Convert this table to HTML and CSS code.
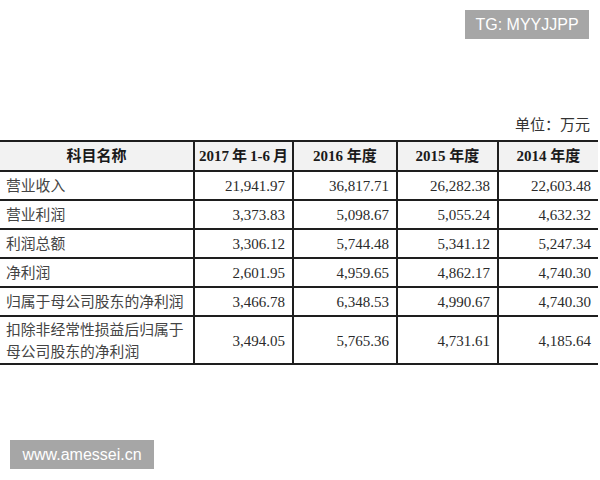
FILE: index.html
```html
<!DOCTYPE html>
<html lang="zh">
<head>
<meta charset="utf-8">
<link rel="stylesheet" href="styles.css">
</head>
<body>
<div class="page">
  <div class="unit">单位：万元</div>
  <table class="fin">
    <colgroup>
      <col class="c1"><col class="c2"><col class="c3"><col class="c4"><col class="c5">
    </colgroup>
    <thead>
      <tr><th>科目名称</th><th class="narrow">2017&#8201;年&#8201;1-6&#8201;月</th><th>2016 年度</th><th>2015 年度</th><th>2014 年度</th></tr>
    </thead>
    <tbody>
      <tr><td class="lbl">营业收入</td><td>21,941.97</td><td>36,817.71</td><td>26,282.38</td><td>22,603.48</td></tr>
      <tr><td class="lbl">营业利润</td><td>3,373.83</td><td>5,098.67</td><td>5,055.24</td><td>4,632.32</td></tr>
      <tr><td class="lbl">利润总额</td><td>3,306.12</td><td>5,744.48</td><td>5,341.12</td><td>5,247.34</td></tr>
      <tr><td class="lbl">净利润</td><td>2,601.95</td><td>4,959.65</td><td>4,862.17</td><td>4,740.30</td></tr>
      <tr><td class="lbl">归属于母公司股东的净利润</td><td>3,466.78</td><td>6,348.53</td><td>4,990.67</td><td>4,740.30</td></tr>
      <tr class="tall"><td class="lbl">扣除非经常性损益后归属于<br>母公司股东的净利润</td><td>3,494.05</td><td>5,765.36</td><td>4,731.61</td><td>4,185.64</td></tr>
    </tbody>
  </table>
</div>
<div class="wm wm-top">TG: MYYJJPP</div>
<div class="wm wm-bottom">www.amessei.cn</div>
</body>
</html>
```

FILE: styles.css
```css
html, body {
  margin: 0;
  padding: 0;
  background: #ffffff;
}
body {
  width: 600px;
  height: 480px;
  position: relative;
  overflow: hidden;
  font-family: "Liberation Serif", "Noto Sans CJK SC", serif;
  color: #2a2a2a;
}
.page {
  padding-top: 114px;
  width: 598px;
}
.unit {
  text-align: right;
  font-size: 15px;
  line-height: 22px;
  height: 26px;
  padding-right: 8px;
  color: #333;
}
.fin {
  width: 598px;
  border-collapse: collapse;
  table-layout: fixed;
  font-size: 15px;
}
.c1 { width: 194px; }
.c2 { width: 99px; }
.c3 { width: 104px; }
.c4 { width: 101px; }
.c5 { width: 100px; }
.fin th, .fin td {
  border-top: 2px solid #1e1e1e;
  border-bottom: 2px solid #1e1e1e;
  border-left: 2px solid #1e1e1e;
  padding: 0 7px;
  height: 27px;
  line-height: 22px;
  white-space: nowrap;
}
.fin th:first-child, .fin td:first-child {
  border-left: none;
}
.fin th {
  background: #f2f2f2;
  font-weight: bold;
  text-align: center;
  height: 28px;
  color: #1a1a1a;
}
.fin th.narrow {
  padding: 0 2px;
}
.fin td {
  text-align: right;
  color: #2b2b2b;
}
.fin td.lbl {
  text-align: left;
  padding-left: 6px;
  padding-right: 0;
  letter-spacing: 0;
  font-size: 14.8px;
  color: #444;
}
.fin tr.tall td {
  height: 44px;
  padding-top: 2px;
}
.wm {
  position: absolute;
  background: #a6a6a6;
  color: #ffffff;
  font-family: "Liberation Sans", "Noto Sans", sans-serif;
  font-size: 16px;
  display: flex;
  align-items: center;
  justify-content: center;
}
.wm-top {
  left: 465px;
  top: 10px;
  width: 124px;
  height: 29px;
}
.wm-bottom {
  left: 10px;
  top: 440px;
  width: 144px;
  height: 29px;
}
```
